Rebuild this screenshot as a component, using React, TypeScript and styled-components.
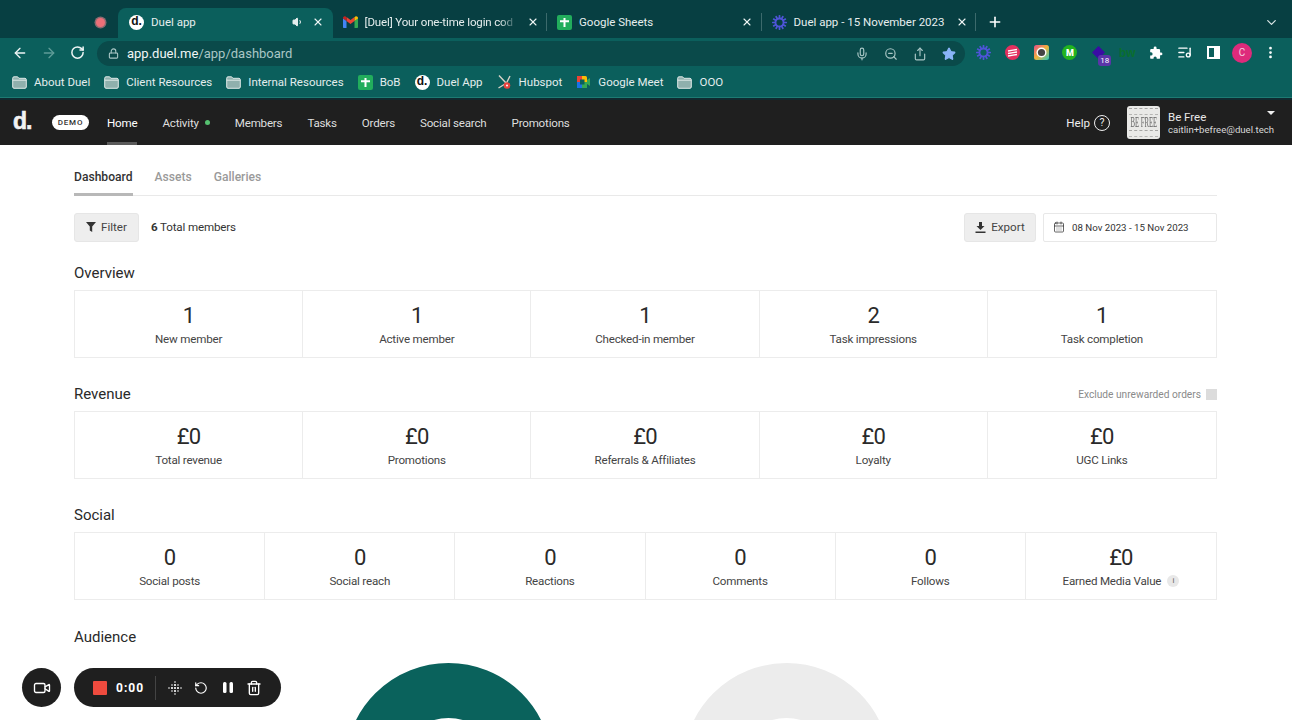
import React from "react";
import styled, { createGlobalStyle } from "styled-components";
import { ArrowLeft, ArrowRight, RotateCw, RotateCcw, Lock, Mic, ZoomOut, Share, Star, ListMusic, MoreVertical, X, Plus, ChevronDown, CalendarDays, Video, Trash2, Volume1 } from "lucide-react";

const Global = createGlobalStyle`
  html, body { margin: 0; padding: 0; background: #fff; height: 720px; overflow: hidden; }
  body { font-family: Roboto, "Liberation Sans", sans-serif; color: #222; }
  #root { height: 720px; overflow: hidden; }
  * { box-sizing: border-box; }
`;

const Shell = styled.div`
  position: relative;
  width: 1292px;
  height: 720px;
  overflow: hidden;
`;

/* ---------- browser chrome ---------- */
const TabStrip = styled.div`
  height: 38px;
  background: #073f42;
  display: flex;
  align-items: flex-end;
`;
const RecSlot = styled.div`
  width: 118px;
  height: 30px;
  padding-bottom: 2px;
  display: flex;
  align-items: center;
  justify-content: flex-end;
  padding-right: 13px;
`;
const RecDot = styled.span`
  width: 9px;
  height: 9px;
  border-radius: 50%;
  background: #ec6f78;
  box-shadow: 0 0 0 1.5px #8a6a70;
`;
const Tab = styled.div<{ $active?: boolean; $sep?: boolean }>`
  position: relative;
  width: 214.5px;
  height: 30px;
  display: flex;
  align-items: center;
  padding: 0 7px 2px ${(p) => (p.$active ? 11 : 10)}px;
  background: ${(p) => (p.$active ? "#0b5f5c" : "transparent")};
  border-radius: 8px 8px 0 0;
  color: #e6eeee;
  font-size: 11.5px;
  gap: 7px;
  &::after {
    content: "";
    display: ${(p) => (p.$sep ? "block" : "none")};
    position: absolute;
    right: 0;
    top: 5px;
    height: 18px;
    width: 1px;
    background: #3c6a6c;
  }
`;
const TabTitle = styled.span<{ $fade?: boolean }>`
  flex: 1;
  min-width: 0;
  white-space: nowrap;
  ${(p) =>
    p.$fade
      ? "letter-spacing: -0.14px; -webkit-mask-image: linear-gradient(90deg,#000 88%,transparent 100%); mask-image: linear-gradient(90deg,#000 88%,transparent 100%);"
      : ""}
`;
const TabIconSlot = styled.span`
  width: 15px;
  height: 15px;
  flex: none;
  display: flex;
  align-items: center;
  justify-content: center;
`;
const NewTab = styled.div`
  width: 38px;
  height: 30px;
  padding-bottom: 2px;
  display: flex;
  align-items: center;
  justify-content: center;
  color: #fff;
`;
const StripEnd = styled.div`
  margin-left: auto;
  width: 42px;
  height: 30px;
  padding-bottom: 2px;
  display: flex;
  align-items: center;
  justify-content: center;
  color: #d8e4e4;
`;

const ToolBar = styled.div`
  height: 29px;
  background: #0b5f5c;
  display: flex;
  align-items: center;
  padding-left: 5px;
`;
const NavBtn = styled.span<{ $dim?: boolean }>`
  width: 29px;
  height: 29px;
  display: flex;
  align-items: center;
  justify-content: center;
  color: ${(p) => (p.$dim ? "#5f9c98" : "#eef5f5")};
`;
const Omni = styled.div`
  margin: 2px 0 0 5px;
  width: 868px;
  height: 25px;
  border-radius: 13px;
  background: #0a4a4a;
  display: flex;
  align-items: center;
  padding-left: 11px;
  color: #a9c6c5;
  font-size: 13px;
`;
const UrlHost = styled.span`
  color: #f1f6f6;
`;
const UrlWrap = styled.span`
  margin-left: 8px;
  flex: 1;
`;
const OmniBtn = styled.span`
  width: 29px;
  display: flex;
  justify-content: center;
  color: #a9c6c5;
`;
const OmniTail = styled.div`
  display: flex;
  padding-right: 2px;
`;
const Exts = styled.div`
  display: flex;
  align-items: center;
  padding-left: 4.5px;
`;
const Ext = styled.span`
  position: relative;
  width: 28.7px;
  height: 29px;
  display: flex;
  align-items: center;
  justify-content: center;
  color: #fff;
`;
const ExtBadge = styled.span`
  position: absolute;
  left: 14px;
  top: 17px;
  background: #5a35a8;
  color: #fff;
  border-radius: 3px;
  font-size: 8px;
  line-height: 11px;
  padding: 0 2px;
`;
const BwMark = styled.span`
  font-family: "Liberation Sans", sans-serif;
  font-size: 12px;
  font-weight: 700;
  color: #0a6e2e;
`;
const ProfileDot = styled.span`
  width: 20px;
  height: 20px;
  border-radius: 50%;
  background: #de2a7b;
  color: #f5d0e0;
  font-size: 10px;
  display: flex;
  align-items: center;
  justify-content: center;
`;
const GreenM = styled.span`
  width: 15px;
  height: 15px;
  border-radius: 50%;
  background: #22b41f;
  color: #fff;
  font-size: 9px;
  font-weight: 900;
  display: flex;
  align-items: center;
  justify-content: center;
`;

const Bookmarks = styled.div`
  height: 31px;
  background: #0b5f5c;
  border-bottom: 1px solid #1d7a73;
  display: flex;
  align-items: center;
  padding-left: 12px;
  gap: 14px;
`;
const Bookmark = styled.span`
  display: flex;
  align-items: center;
  gap: 7px;
  color: #e3eded;
  font-size: 11.5px;
  white-space: nowrap;
`;
const BlackRule = styled.div`
  height: 2px;
  background: #0f2a30;
`;

const Fav = styled.span<{ $s?: number }>`
  width: ${(p) => p.$s ?? 15}px;
  height: ${(p) => p.$s ?? 15}px;
  border-radius: 50%;
  background: #fff;
  color: #111;
  font-family: "Liberation Sans", sans-serif;
  font-weight: 700;
  font-size: 12px;
  line-height: 1;
  display: flex;
  align-items: center;
  justify-content: center;
  padding-bottom: 2px;
  flex: none;
`;

const FolderIcon = () => (
  <svg width="15" height="13" viewBox="0 0 15 13" fill="none">
    <path d="M.7 2.2C.7 1.4 1.3.8 2 .8h3.6l1.3 1.5H13c.7 0 1.3.6 1.3 1.3v7.4c0 .7-.6 1.3-1.3 1.3H2c-.7 0-1.3-.6-1.3-1.3z" fill="#8fb0ad" stroke="#dfe9e8" strokeWidth="1" />
    <path d="M.7 4.2h13.6" stroke="#dfe9e8" strokeWidth="1" />
  </svg>
);
const SheetIcon = () => (
  <svg width="15" height="15" viewBox="0 0 15 15">
    <rect width="15" height="15" rx="2" fill="#22ad5c" />
    <path d="M7.5 3v9M3 6.2h9" stroke="#fff" strokeWidth="2" />
  </svg>
);
const GmailIcon = () => (
  <svg width="15" height="12" viewBox="0 0 15 12">
    <path d="M0 2v9c0 .6.4 1 1 1h2.5V5z" fill="#4285f4" />
    <path d="M15 2v9c0 .6-.4 1-1 1h-2.5V5z" fill="#34a853" />
    <path d="M3.5 5 7.5 8l4-3V1l-4 3-4-3z" fill="#ea4335" />
    <path d="M0 2c0-1.400 1.700-2.200 2.600-1.400l.9.7V5L0 2.600z" fill="#c5221f" />
    <path d="M15 2c0-1.400-1.700-2.200-2.600-1.400l-.9.7V5L15 2.600z" fill="#fbbc04" />
  </svg>
);
const Burst = ({ size = 15 }: { size?: number }) => (
  <svg width={size} height={size} viewBox="0 0 16 16">
    <circle cx="8" cy="8" r="4.3" fill="none" stroke="#4f55d8" strokeWidth="2" />
    {Array.from({ length: 12 }).map((_, i) => (
      <rect key={i} x="7.1" y="0" width="1.8" height="4" rx=".6" fill="#4f55d8" transform={`rotate(${i * 30} 8 8)`} />
    ))}
  </svg>
);
const HubspotIcon = () => (
  <svg width="15" height="16" viewBox="0 0 15 16">
    <path d="M2 1.5 9 9M13 2 9.5 9M1.5 14 8 10" stroke="#d8d3c8" strokeWidth="1.4" fill="none" />
    <circle cx="10" cy="11.5" r="3.3" fill="#e8433e" />
    <circle cx="10" cy="11.5" r="1" fill="#fff" />
  </svg>
);
const MeetIcon = () => (
  <svg width="15" height="14" viewBox="0 0 15 14">
    <rect x="1" y="1" width="10" height="12" rx="1.5" fill="#fbbc04" />
    <rect x="1" y="1" width="5" height="6" fill="#ea4335" />
    <rect x="1" y="7" width="5" height="6" fill="#1a73e8" />
    <rect x="6" y="7" width="5" height="6" fill="#34a853" />
    <rect x="4" y="4.5" width="4.5" height="5" fill="#0b5f5c" />
    <path d="M11 5 14 3v8l-3-2z" fill="#34a853" />
  </svg>
);
const CloseIcon = () => <X size={12} strokeWidth={2.2} color="#eef5f5" />;

/* ---------- product nav ---------- */
const Nav = styled.div`
  height: 45px;
  background: #1f1f1f;
  display: flex;
  align-items: center;
  padding: 0 17px 0 13px;
`;
const Logo = styled.span`
  font-family: "Liberation Sans", sans-serif;
  font-weight: 700;
  font-size: 23px;
  line-height: 1;
  color: #f2f2f2;
  width: 39px;
  letter-spacing: -1px;
  padding-bottom: 2px;
  -webkit-text-stroke: 0.6px #f2f2f2;
`;
const DemoPill = styled.span`
  width: 37px;
  height: 15px;
  border-radius: 8px;
  background: #fff;
  color: #333;
  font-size: 8px;
  letter-spacing: 0.8px;
  font-weight: 500;
  display: flex;
  align-items: center;
  justify-content: center;
  margin-right: 18px;
`;
const NavLinks = styled.div`
  display: flex;
  gap: 25px;
  height: 100%;
`;
const NavLink = styled.span<{ $active?: boolean }>`
  position: relative;
  height: 100%;
  display: flex;
  align-items: center;
  gap: 6px;
  color: ${(p) => (p.$active ? "#fff" : "#dedede")};
  font-size: 11.6px;
  letter-spacing: -0.2px;
  white-space: nowrap;
  &::after {
    content: "";
    display: ${(p) => (p.$active ? "block" : "none")};
    position: absolute;
    left: 0;
    right: 0;
    bottom: 0;
    height: 3px;
    background: #5a5a5a;
  }
`;
const StatusDot = styled.span`
  width: 5px;
  height: 5px;
  border-radius: 50%;
  background: #56c271;
`;
const NavRight = styled.div`
  margin-left: auto;
  display: flex;
  align-items: center;
`;
const HelpText = styled.span`
  color: #eee;
  font-size: 11.6px;
  margin-right: 4px;
`;
const HelpCircle = styled.span`
  width: 16px;
  height: 16px;
  border-radius: 50%;
  border: 1px solid #eee;
  color: #eee;
  font-size: 10.5px;
  display: flex;
  align-items: center;
  justify-content: center;
  margin-right: 17px;
`;
const Avatar = styled.span`
  position: relative;
  width: 33px;
  height: 33px;
  border-radius: 3px;
  background: #e9e9e7;
  overflow: hidden;
  display: flex;
  align-items: center;
  justify-content: center;
  margin-right: 8px;
  &::before, &::after {
    content: "";
    position: absolute;
    left: 2px;
    right: 2px;
    height: 5px;
    border-top: 1px dashed #a5a5a3;
    border-bottom: 1px dashed #b5b5b3;
  }
  &::before { top: 2px; }
  &::after { bottom: 2px; }
`;
const AvatarText = styled.span`
  font-family: "Liberation Serif", serif;
  font-size: 15px;
  color: #666;
  white-space: nowrap;
  transform: scaleX(0.45);
`;
const Account = styled.div`
  width: 107px;
  position: relative;
  color: #e8e8e8;
  padding-top: 2px;
`;
const AccountName = styled.div`
  font-size: 11.5px;
  line-height: 13px;
  margin-bottom: 0;
`;
const AccountMail = styled.div`
  font-size: 9.6px;
  line-height: 12px;
  color: #d8d8d8;
  white-space: nowrap;
`;
const Caret = styled.span`
  position: absolute;
  right: 0;
  top: 2px;
  border-left: 4px solid transparent;
  border-right: 4px solid transparent;
  border-top: 4px solid #eee;
`;

/* ---------- page ---------- */
const Page = styled.main`
  padding: 0 75px 0 74px;
`;
const SubTabs = styled.div`
  height: 51px;
  display: flex;
  gap: 22px;
  border-bottom: 1px solid #e9e9e9;
`;
const SubTab = styled.span<{ $active?: boolean }>`
  position: relative;
  padding-top: 24px;
  font-size: 12.1px;
  font-weight: 500;
  line-height: 16px;
  color: ${(p) => (p.$active ? "#333" : "#9a9a9a")};
  &::after {
    content: "";
    display: ${(p) => (p.$active ? "block" : "none")};
    position: absolute;
    left: 0;
    right: 0;
    bottom: -1px;
    height: 3px;
    background: #b8b8b8;
  }
`;
const Controls = styled.div`
  margin-top: 16px;
  height: 30px;
  display: flex;
  align-items: center;
  margin-bottom: 21px;
`;
const GreyButton = styled.span`
  height: 29px;
  border-radius: 3px;
  background: #eeeeee;
  border: 1px solid #e6e6e6;
  color: #444;
  font-size: 11.6px;
  display: flex;
  align-items: center;
  justify-content: center;
  gap: 5px;
`;
const FilterBtn = styled(GreyButton)`
  width: 65px;
`;
const ExportBtn = styled(GreyButton)`
  width: 72px;
  margin-left: auto;
`;
const Total = styled.span`
  margin-left: 12px;
  font-size: 11.6px;
  letter-spacing: -0.15px;
  color: #333;
`;
const DateBox = styled.span`
  margin-left: 7px;
  width: 174px;
  height: 29px;
  border: 1px solid #e8e8e8;
  border-radius: 2px;
  display: flex;
  align-items: center;
  padding-left: 9px;
  gap: 7px;
  font-size: 9.7px;
  color: #333;
`;
const SectionHead = styled.div`
  display: flex;
  justify-content: space-between;
  align-items: center;
  height: 20px;
  margin-bottom: 7px;
`;
const SectionTitle = styled.h2`
  margin: 0;
  font-size: 15px;
  font-weight: 400;
  color: #2a2a2a;
`;
const Exclude = styled.span`
  display: flex;
  align-items: center;
  gap: 5px;
  font-size: 10.2px;
  color: #8a8a8a;
`;
const Check = styled.span`
  width: 11px;
  height: 11px;
  background: #dcdcdc;
`;
const Stats = styled.div<{ $cols: number }>`
  display: grid;
  grid-template-columns: repeat(${(p) => p.$cols}, 1fr);
  height: 68px;
  border: 1px solid #ececec;
  margin-bottom: 26.2px;
`;
const Stat = styled.div`
  display: flex;
  flex-direction: column;
  align-items: center;
  padding-top: 11px;
  border-right: 1px solid #ececec;
  &:last-child { border-right: 0; }
`;
const StatValue = styled.div`
  font-size: 22px;
  line-height: 27px;
  letter-spacing: -0.8px;
  color: #2a2a2a;
`;
const StatLabel = styled.div`
  margin-top: 2px;
  font-size: 11.6px;
  letter-spacing: -0.2px;
  line-height: 16px;
  color: #444;
  display: flex;
  align-items: center;
  gap: 6px;
`;
const InfoDot = styled.span`
  width: 12px;
  height: 12px;
  border-radius: 50%;
  background: #e8e8e8;
  color: #666;
  font-size: 8px;
  display: flex;
  align-items: center;
  justify-content: center;
`;
const Charts = styled.div`
  padding-left: 271px;
  display: flex;
  gap: 131px;
  margin-top: 16px;
`;

/* ---------- floating recorder ---------- */
const Recorder = styled.div`
  position: absolute;
  left: 22px;
  top: 668px;
  display: flex;
  gap: 13px;
`;
const CamBtn = styled.span`
  width: 39px;
  height: 39px;
  border-radius: 50%;
  background: #1f1f1f;
  color: #fff;
  display: flex;
  align-items: center;
  justify-content: center;
`;
const Pill = styled.div`
  width: 207px;
  height: 39px;
  border-radius: 20px;
  background: #1f1f1f;
  color: #fff;
  display: flex;
  align-items: center;
  padding-left: 19px;
`;
const RedSq = styled.span`
  width: 14px;
  height: 14px;
  border-radius: 1px;
  background: #ee4b3e;
  margin-right: 9px;
`;
const Time = styled.span`
  font-size: 12px;
  font-weight: 700;
  letter-spacing: 1px;
  width: 39px;
`;
const PillSep = styled.span`
  width: 1px;
  height: 24px;
  background: #444;
  margin-right: 5.5px;
`;
const PillBtn = styled.span`
  width: 26.5px;
  display: flex;
  justify-content: center;
`;

const overview = [["1", "New member"], ["1", "Active member"], ["1", "Checked-in member"], ["2", "Task impressions"], ["1", "Task completion"]];
const revenue = [["£0", "Total revenue"], ["£0", "Promotions"], ["£0", "Referrals & Affiliates"], ["£0", "Loyalty"], ["£0", "UGC Links"]];
const social = [["0", "Social posts"], ["0", "Social reach"], ["0", "Reactions"], ["0", "Comments"], ["0", "Follows"]];

const StatCell = ({ v, l, info }: { v: string; l: string; info?: boolean }) => (
  <Stat>
    <StatValue>{v}</StatValue>
    <StatLabel>
      {l}
      {info && <InfoDot>i</InfoDot>}
    </StatLabel>
  </Stat>
);

const Donut = ({ color }: { color: string }) => (
  <svg width="207" height="207" viewBox="0 0 207 207">
    <circle cx="103.5" cy="103.5" r="76" fill="none" stroke={color} strokeWidth="55" />
  </svg>
);

const GridDots = () => (
  <svg width="16" height="16" viewBox="0 0 16 16" fill="#fff">
    {[-6, -3, 0, 3, 6].flatMap((x) =>
      [-6, -3, 0, 3, 6].map((y) =>
        Math.abs(x) + Math.abs(y) <= 6 ? <circle key={`${x}${y}`} cx={8 + x} cy={8 + y} r={Math.abs(x) + Math.abs(y) <= 3 ? 1.1 : 0.8} /> : null
      )
    )}
  </svg>
);

export default function App() {
  return (
    <Shell>
      <Global />
      <TabStrip>
        <RecSlot><RecDot /></RecSlot>
        <Tab $active>
          <TabIconSlot><Fav>d.</Fav></TabIconSlot>
          <TabTitle>Duel app</TabTitle>
          <Volume1 size={12} fill="#e6eeee" color="#e6eeee" />
          <TabIconSlot><CloseIcon /></TabIconSlot>
        </Tab>
        <Tab $sep>
          <TabIconSlot><GmailIcon /></TabIconSlot>
          <TabTitle $fade>[Duel] Your one-time login cod</TabTitle>
          <TabIconSlot><CloseIcon /></TabIconSlot>
        </Tab>
        <Tab $sep>
          <TabIconSlot><SheetIcon /></TabIconSlot>
          <TabTitle>Google Sheets</TabTitle>
          <TabIconSlot><CloseIcon /></TabIconSlot>
        </Tab>
        <Tab $sep>
          <TabIconSlot><Burst /></TabIconSlot>
          <TabTitle>Duel app - 15 November 2023</TabTitle>
          <TabIconSlot><CloseIcon /></TabIconSlot>
        </Tab>
        <NewTab><Plus size={16} strokeWidth={2.4} /></NewTab>
        <StripEnd><ChevronDown size={15} /></StripEnd>
      </TabStrip>

      <ToolBar>
        <NavBtn><ArrowLeft size={16} strokeWidth={2} /></NavBtn>
        <NavBtn $dim><ArrowRight size={16} strokeWidth={2} /></NavBtn>
        <NavBtn><RotateCw size={15} strokeWidth={2.4} /></NavBtn>
        <Omni>
          <Lock size={11} strokeWidth={2.4} />
          <UrlWrap><UrlHost>app.duel.me</UrlHost>/app/dashboard</UrlWrap>
          <OmniTail>
            <OmniBtn><Mic size={14} /></OmniBtn>
            <OmniBtn><ZoomOut size={14} /></OmniBtn>
            <OmniBtn><Share size={14} /></OmniBtn>
            <OmniBtn><Star size={14} fill="#8ab4f8" color="#8ab4f8" /></OmniBtn>
          </OmniTail>
        </Omni>
        <Exts>
          <Ext><Burst size={15} /></Ext>
          <Ext>
            <svg width="15" height="15" viewBox="0 0 15 15">
              <circle cx="7.5" cy="7.5" r="7.5" fill="#e3305f" />
              <path d="M3 6 8 5.2 12 4.5M3 8.5 8 7.7 12 7M3 11 8 10.2 12 9.5" stroke="#fff" strokeWidth="1.3" fill="none" />
            </svg>
          </Ext>
          <Ext>
            <svg width="15" height="15" viewBox="0 0 15 15">
              <defs>
                <linearGradient id="lg" x1="0" y1="0" x2="1" y2="1">
                  <stop offset="0" stopColor="#e64a8a" />
                  <stop offset=".5" stopColor="#f0b43c" />
                  <stop offset="1" stopColor="#22c8c0" />
                </linearGradient>
              </defs>
              <rect width="15" height="15" rx="2.5" fill="url(#lg)" />
              <circle cx="7.5" cy="7.5" r="5" fill="#fff" />
              <circle cx="7.5" cy="7.5" r="3.6" fill="#444" />
            </svg>
          </Ext>
          <Ext><GreenM>M</GreenM></Ext>
          <Ext>
            <svg width="15" height="15" viewBox="0 0 15 15"><path d="M7.5 1 14 7.5 7.5 14 1 7.5z" fill="#3a0ca3" /></svg>
            <ExtBadge>18</ExtBadge>
          </Ext>
          <Ext><BwMark>bw</BwMark></Ext>
          <Ext>
            <svg width="14" height="14" viewBox="0 0 24 24" fill="#fff">
              <path d="M20.5 11H19V7a2 2 0 0 0-2-2h-4V3.5a2.5 2.5 0 0 0-5 0V5H4a2 2 0 0 0-2 2v3.8h1.5a2.7 2.7 0 0 1 0 5.4H2V20a2 2 0 0 0 2 2h3.8v-1.5a2.7 2.7 0 0 1 5.4 0V22H17a2 2 0 0 0 2-2v-4h1.5a2.5 2.5 0 0 0 0-5z" />
            </svg>
          </Ext>
          <Ext><ListMusic size={15} strokeWidth={2.2} /></Ext>
          <Ext>
            <svg width="13" height="13" viewBox="0 0 13 13">
              <rect x="1" y="1" width="11" height="11" fill="none" stroke="#fff" strokeWidth="2" />
              <rect x="7" y="1" width="5" height="11" fill="#fff" />
            </svg>
          </Ext>
          <Ext><ProfileDot>C</ProfileDot></Ext>
          <Ext><MoreVertical size={15} strokeWidth={2.4} /></Ext>
        </Exts>
      </ToolBar>

      <Bookmarks>
        <Bookmark><FolderIcon />About Duel</Bookmark>
        <Bookmark><FolderIcon />Client Resources</Bookmark>
        <Bookmark><FolderIcon />Internal Resources</Bookmark>
        <Bookmark><SheetIcon />BoB</Bookmark>
        <Bookmark><Fav>d.</Fav>Duel App</Bookmark>
        <Bookmark><HubspotIcon />Hubspot</Bookmark>
        <Bookmark><MeetIcon />Google Meet</Bookmark>
        <Bookmark><FolderIcon />OOO</Bookmark>
      </Bookmarks>
      <BlackRule />

      <Nav>
        <Logo>d.</Logo>
        <DemoPill>DEMO</DemoPill>
        <NavLinks>
          <NavLink $active>Home</NavLink>
          <NavLink>Activity<StatusDot /></NavLink>
          <NavLink>Members</NavLink>
          <NavLink>Tasks</NavLink>
          <NavLink>Orders</NavLink>
          <NavLink>Social search</NavLink>
          <NavLink>Promotions</NavLink>
        </NavLinks>
        <NavRight>
          <HelpText>Help</HelpText>
          <HelpCircle>?</HelpCircle>
          <Avatar><AvatarText>BE FREE</AvatarText></Avatar>
          <Account>
            <AccountName>Be Free</AccountName>
            <AccountMail>caitlin+befree@duel.tech</AccountMail>
            <Caret />
          </Account>
        </NavRight>
      </Nav>

      <Page>
        <SubTabs>
          <SubTab $active>Dashboard</SubTab>
          <SubTab>Assets</SubTab>
          <SubTab>Galleries</SubTab>
        </SubTabs>
        <Controls>
          <FilterBtn>
            <svg width="10" height="10" viewBox="0 0 10 10"><path d="M0 0h10L6.2 4.6V10L3.8 8.6V4.6z" fill="#333" /></svg>
            Filter
          </FilterBtn>
          <Total><b>6</b> Total members</Total>
          <ExportBtn>
            <svg width="11" height="11" viewBox="0 0 11 11"><path d="M4 0h3v4h2.5L5.5 8 1.5 4H4zM.5 9.5h10V11H.5z" fill="#333" /></svg>
            Export
          </ExportBtn>
          <DateBox><CalendarDays size={12} strokeWidth={1.5} />08 Nov 2023 - 15 Nov 2023</DateBox>
        </Controls>

        <SectionHead><SectionTitle>Overview</SectionTitle></SectionHead>
        <Stats $cols={5}>{overview.map(([v, l]) => <StatCell key={l} v={v} l={l} />)}</Stats>

        <SectionHead>
          <SectionTitle>Revenue</SectionTitle>
          <Exclude>Exclude unrewarded orders<Check /></Exclude>
        </SectionHead>
        <Stats $cols={5}>{revenue.map(([v, l]) => <StatCell key={l} v={v} l={l} />)}</Stats>

        <SectionHead><SectionTitle>Social</SectionTitle></SectionHead>
        <Stats $cols={6}>
          {social.map(([v, l]) => <StatCell key={l} v={v} l={l} />)}
          <StatCell v="£0" l="Earned Media Value" info />
        </Stats>

        <SectionHead><SectionTitle>Audience</SectionTitle></SectionHead>
        <Charts>
          <Donut color="#0a625c" />
          <Donut color="#ececec" />
        </Charts>
      </Page>

      <Recorder>
        <CamBtn><Video size={18} strokeWidth={1.8} /></CamBtn>
        <Pill>
          <RedSq />
          <Time>0:00</Time>
          <PillSep />
          <PillBtn><GridDots /></PillBtn>
          <PillBtn><RotateCcw size={14} strokeWidth={2} /></PillBtn>
          <PillBtn>
            <svg width="12" height="13" viewBox="0 0 12 13" fill="#fff"><rect x="1" y="1" width="3.5" height="11" rx="1.5" /><rect x="7.5" y="1" width="3.5" height="11" rx="1.5" /></svg>
          </PillBtn>
          <PillBtn><Trash2 size={16} strokeWidth={2} /></PillBtn>
        </Pill>
      </Recorder>
    </Shell>
  );
}
